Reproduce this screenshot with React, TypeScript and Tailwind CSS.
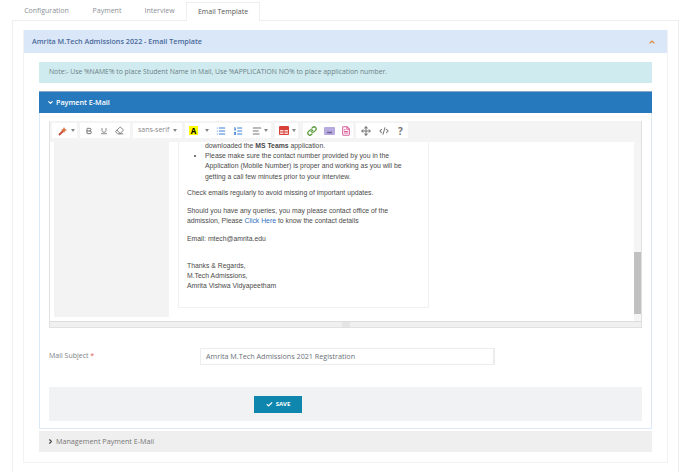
import React from 'react';
import {
  AlignLeft,
  Bold,
  Check,
  ChevronDown,
  ChevronRight,
  ChevronUp,
  CodeXml,
  Eraser,
  FileText,
  Link,
  List,
  ListOrdered,
  Move,
  Underline,
} from 'lucide-react';

const Caret = ({ className }: { className?: string }) => (
  <span className={`h-0 w-0 border-x-[2.5px] border-t-[3px] border-x-transparent border-t-[#888] ${className ?? ''}`} />
);

const Group: React.FC<{ children: React.ReactNode; className?: string }> = ({ children, className }) => (
  <div className={`flex h-[15px] items-center rounded-[1px] bg-white ${className ?? ''}`}>{children}</div>
);

const WandIcon = () => (
  <svg width="10" height="10" viewBox="0 0 10 10">
    <path d="M1 9 L6 4" stroke="#c9503f" strokeWidth="2" />
    <path d="M6 1 L7 3 L9 4 L7 5 L6 7 L5 5 L3 4 L5 3 Z" fill="#e0733f" />
  </svg>
);

const TableIcon = () => (
  <svg width="10" height="9" viewBox="0 0 10 9">
    <rect width="10" height="9" rx="1" fill="#d9423a" />
    <path d="M1 4h3.5v1.5H1zM5.5 4H9v1.5H5.5zM1 6.5h3.5V8H1zM5.5 6.5H9V8H5.5z" fill="#f6d5d2" />
  </svg>
);

const ImageIcon = () => (
  <svg width="11" height="8" viewBox="0 0 11 8">
    <rect width="11" height="8" rx="1" fill="#b7aadf" />
    <path d="M3 5.5 L8 5.5" stroke="#6f6399" strokeWidth="1.5" />
  </svg>
);

const Toolbar = () => (
  <div className="flex h-[21px] items-start bg-[#f4f4f4] pl-[2px] pt-[2px]">
    <Group className="w-[25px] pl-[6px]">
      <WandIcon />
      <Caret className="ml-[3px]" />
    </Group>
    <Group className="ml-[3px] w-[50px] pl-[5px]">
      <Bold size={8} strokeWidth={3} className="text-[#777]" />
      <Underline size={8} strokeWidth={2.5} className="ml-[7px] text-[#777]" />
      <Eraser size={9} strokeWidth={2.5} className="ml-[7px] text-[#777]" />
    </Group>
    <Group className="ml-[3px] w-[49px] whitespace-nowrap pl-[5px] text-[7px] text-[#888]">
      sans-serif
      <Caret className="ml-[4px]" />
    </Group>
    <Group className="ml-[3px] w-[86px] pl-[4px]">
      <span className="flex h-[9px] w-[9px] items-center justify-center bg-[#ffff00] text-[8px] font-bold text-black">A</span>
      <Caret className="ml-[7px]" />
      <List size={10} strokeWidth={2.5} className="ml-[7px] text-[#3a7fd5]" />
      <ListOrdered size={10} strokeWidth={2.5} className="ml-[7px] text-[#3a7fd5]" />
      <AlignLeft size={10} strokeWidth={2.5} className="ml-[9px] text-[#777]" />
      <Caret className="ml-[2px]" />
    </Group>
    <Group className="ml-[4px] w-[23px] pl-[4px]">
      <TableIcon />
      <Caret className="ml-[3px]" />
    </Group>
    <Group className="ml-[5px] w-[50px] pl-[4px]">
      <Link size={10} strokeWidth={3} className="text-[#5a9a3a]" />
      <span className="ml-[7px] flex"><ImageIcon /></span>
      <FileText size={10} strokeWidth={2.5} className="ml-[6px] text-[#d9609a]" />
    </Group>
    <Group className="ml-[3px] w-[52px] pl-[5px]">
      <Move size={10} strokeWidth={2.5} className="text-[#777]" />
      <CodeXml size={10} strokeWidth={2.5} className="ml-[8px] text-[#777]" />
      <span className="ml-[9px] text-[10px] font-bold leading-none text-[#777]">?</span>
    </Group>
  </div>
);

const EditorBody = () => (
  <div className="flex h-[179px] items-end overflow-hidden bg-white">
    <div className="mb-[4px] ml-[4px] h-[175px] w-[115px] shrink-0 bg-[#f3f3f3]" />
    <div className="mb-[13px] ml-[9px] h-[166px] w-[251px] shrink-0 overflow-hidden border-x border-b border-[#f0f0f0] pl-[8px] text-[6.85px] leading-[10.2px] text-[#4a4a4a] font-['Liberation_Sans',sans-serif]">
      <p className="-mt-[1px] ml-[18px] whitespace-nowrap">
        downloaded the <b>MS Teams</b> application.
      </p>
      <ul className="ml-[18px] list-disc">
        <li className="whitespace-nowrap">Please make sure the contact number provided by you in the</li>
        <li className="list-none whitespace-nowrap">Application (Mobile Number) is proper and working as you will be</li>
        <li className="list-none whitespace-nowrap">getting a call few minutes prior to your interview.</li>
      </ul>
      <p className="mt-[6px]">Check emails regularly to avoid missing of important updates.</p>
      <p className="mt-[8px] whitespace-nowrap">Should you have any queries, you may please contact office of the</p>
      <p className="whitespace-nowrap">
        admission, Please <span className="text-[#2f6fc4]">Click Here</span> to know the contact details
      </p>
      <p className="mt-[8px]">Email: mtech@amrita.edu</p>
      <p className="mt-[16px]">Thanks &amp; Regards,</p>
      <p>M.Tech Admissions,</p>
      <p>Amrita Vishwa Vidyapeetham</p>
    </div>
    <div className="ml-auto flex h-full w-[7px] flex-col bg-[#f5f5f5]">
      <div className="flex-1" />
      <div className="h-[62px] bg-[#c1c1c1]" />
      <div className="h-[7px]" />
    </div>
  </div>
);

export default function App() {
  return (
    <div className="h-[472px] w-[691px] overflow-hidden bg-white font-['Open_Sans',sans-serif]">
      <div className="flex h-[20px] items-end pl-[12px] text-[7px] text-[#8a8f96]">
        <span className="flex h-[18px] w-[69px] items-center justify-center">Configuration</span>
        <span className="flex h-[18px] w-[52px] items-center justify-center">Payment</span>
        <span className="flex h-[18px] w-[53px] items-center justify-center">Interview</span>
        <span className="relative top-px flex h-[19px] w-[74px] items-center justify-center border-x border-t border-[#eceef1] bg-white text-[#555]">
          Email Template
        </span>
      </div>
      <div className="ml-[12px] h-[460px] w-[667px] border-x border-t border-[#eceef1] px-[10px] pt-[9px]">
        <div className="h-[433px] w-[645px] border-x border-b border-[#f0f2f5]">
          <div className="flex h-[23px] items-center justify-between bg-[#d9e7f9] pl-[8px] pr-[11px] text-[7.2px] font-semibold text-[#4a6a9a]">
            Amrita M.Tech Admissions 2022 - Email Template
            <ChevronUp size={8} strokeWidth={3.5} className="text-[#e08a4a]" />
          </div>
          <div className="px-[15px] pt-[9px]">
            <div className="flex h-[21px] w-[613px] items-center bg-[#d0ebef] pl-[10px] text-[6.8px] text-[#6a7f86]">
              Note:- Use %NAME% to place Student Name in Mail, Use %APPLICATION NO% to place application number.
            </div>
            <div className="mt-[8px] w-[613px] border-x border-b border-[#dbe8f5]">
              <div className="-mx-px flex h-[22px] items-center gap-[2px] border-t border-[#8aa9c7] bg-[#2779bd] pl-[8px] text-[7.2px] font-semibold text-white">
                <ChevronDown size={7} strokeWidth={4} />
                Payment E-Mail
              </div>
              <div className="px-[9px] pt-[8px]">
                <div className="border-x border-b border-[#e0e0e0]">
                  <Toolbar />
                  <EditorBody />
                  <div className="flex h-[6px] justify-center border-t border-[#dddddd] bg-[#f0f0f0]">
                    <div className="h-full w-[8px] bg-[#e4e4e4]" />
                  </div>
                </div>
                <div className="mt-[20px] flex h-[17px] items-center text-[7px] text-[#7a7f87]">
                  <span className="w-[151px]">
                    Mail Subject <span className="text-[#e05a5a]">*</span>
                  </span>
                  <div className="flex h-[17px] w-[295px] items-center border-y border-l border-r-2 border-[#ececec] pl-[5px] text-[7.2px] text-[#6a6f78]">
                    Amrita M.Tech Admissions 2021 Registration
                  </div>
                </div>
                <div className="mt-[22px] flex h-[34px] items-center bg-[#f1f2f4] pl-[205px]">
                  <button className="flex h-[17px] w-[48px] items-center justify-center gap-[3px] bg-[#0f86ad] text-[6px] font-bold text-white">
                    <Check size={7} strokeWidth={4} />
                    SAVE
                  </button>
                </div>
                <div className="h-[7px]" />
              </div>
            </div>
            <div className="mt-[2px] flex h-[21px] w-[613px] items-center gap-[2px] bg-[#efefef] pl-[8px] text-[7.2px] text-[#777]">
              <ChevronRight size={7} strokeWidth={4} className="text-[#444]" />
              Management Payment E-Mail
            </div>
          </div>
        </div>
      </div>
    </div>
  );
}
